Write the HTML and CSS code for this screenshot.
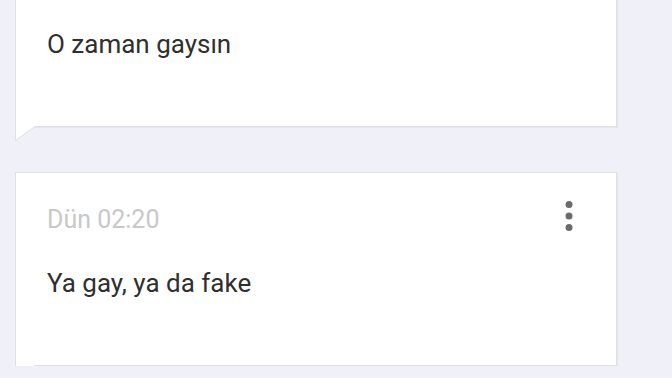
FILE: index.html
```html
<!DOCTYPE html>
<html lang="tr">
<head>
    <meta charset="UTF-8">
    <meta name="viewport" content="width=device-width, initial-scale=1.0">
    <title>Mesajlar</title>
    <link rel="stylesheet" href="styles.css">
</head>
<body>
    <!-- Message thread -->
    <div class="thread">
        <div class="message">
            <div class="message-head">
                <span class="message-time">Dün 02:19</span>
                <button class="menu-btn" aria-label="Menü">
                    <svg width="32" height="34" viewBox="0 0 32 34"><circle cx="16" cy="3.5" r="3.5"/><circle cx="16" cy="15" r="3.5"/><circle cx="16" cy="26.5" r="3.5"/></svg>
                </button>
            </div>
            <p class="message-text">O zaman gaysın</p>
            <svg class="tail" width="20" height="15" viewBox="0 0 20 15"><path d="M1 0 H20 L1 14 Z" fill="#fff"/><path d="M0.5 0 V14.5 L20 0.5" fill="none" stroke="#dfdfe6"/></svg>
        </div>

        <div class="message">
            <div class="message-head">
                <span class="message-time">Dün 02:20</span>
                <button class="menu-btn" aria-label="Menü">
                    <svg width="32" height="34" viewBox="0 0 32 34"><circle cx="16" cy="3.5" r="3.5"/><circle cx="16" cy="15" r="3.5"/><circle cx="16" cy="26.5" r="3.5"/></svg>
                </button>
            </div>
            <p class="message-text">Ya gay, ya da fake</p>
            <svg class="tail" width="20" height="15" viewBox="0 0 20 15"><path d="M1 0 H20 L1 14 Z" fill="#fff"/><path d="M0.5 0 V14.5 L20 0.5" fill="none" stroke="#dfdfe6"/></svg>
        </div>
    </div>
</body>
</html>
```

FILE: styles.css
```css
body {
    font-family: Roboto, 'Noto Sans', sans-serif;
    background-color: #eff0f8;
    margin: 0;
    padding: 0;
    overflow: hidden;
}

/* Thread list, scrolled so the first card is cut at the top */
.thread {
    display: flex;
    flex-direction: column;
    gap: 45px;
    padding-left: 15px;
    margin-top: -67px;
}

.message {
    position: relative;
    width: 602px;
    box-sizing: border-box;
    background-color: #fff;
    border: 1px solid #dfdfe6;
    box-shadow: 1px 1px 1px rgba(0, 0, 0, 0.04);
    padding: 32px 31px 67px;
}

.message-head {
    display: flex;
    justify-content: space-between;
    align-items: center;
    height: 30px;
}

.message-time {
    font-size: 25px;
    line-height: 30px;
    color: #c8c8c8;
}

.menu-btn {
    background: none;
    border: none;
    padding: 0;
    width: 32px;
    height: 34px;
    margin-top: -4px;
    cursor: pointer;
}

.menu-btn svg {
    display: block;
    fill: #6b6b6b;
}

.message-text {
    margin: 33px 0 0;
    font-size: 26px;
    line-height: 30px;
    color: #2f2f2f;
}

/* Speech bubble tail under the bottom-left corner */
.tail {
    position: absolute;
    left: -1px;
    top: 100%;
    display: block;
}
```
